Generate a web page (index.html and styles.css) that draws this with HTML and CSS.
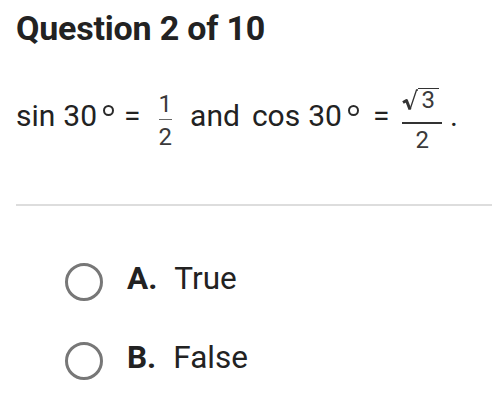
FILE: index.html
```html
<!DOCTYPE html>
<html>
<head>
<meta charset="utf-8">
<link rel="stylesheet" href="styles.css">
</head>
<body>
<div class="page">
  <h1 class="title">Question 2 of 10</h1>
  <div class="stem">
    <span class="tok">sin</span>
    <span class="tok n1">30</span>
    <span class="deg"></span>
    <span class="tok eq1">=</span>
    <span class="frac half">
      <span class="num">1</span>
      <span class="den">2</span>
    </span>
    <span class="tok w-and">and</span>
    <span class="tok w-cos">cos</span>
    <span class="tok n2">30</span>
    <span class="deg"></span>
    <span class="tok eq2">=</span>
    <span class="frac root">
      <span class="num">
        <svg class="rad" width="16" height="24" viewBox="0 0 16 24"><path d="M1 13.5 L4.5 11.5 L8 20.5" fill="none" stroke="#333" stroke-width="3" stroke-linejoin="round"/><path d="M8 20.5 L14.5 1 L16 1" fill="none" stroke="#333" stroke-width="1.3"/></svg>
        <span class="radicand">3</span>
      </span>
      <span class="den">2</span>
    </span>
    <span class="tok dot">.</span>
  </div>
  <hr class="divider">
  <div class="options">
    <div class="option"><span class="radio"></span><span class="letter">A.</span><span class="answer">True</span></div>
    <div class="option"><span class="radio"></span><span class="letter">B.</span><span class="answer">False</span></div>
  </div>
</div>
</body>
</html>
```
FILE: styles.css
```css
html, body {
  margin: 0;
  padding: 0;
  background: #ffffff;
}
.page {
  font-family: Roboto, "Liberation Sans", sans-serif;
  color: #222222;
  padding: 8px 0 0 16px;
}
.title {
  margin: 0;
  font-size: 34px;
  font-weight: 700;
  line-height: 40px;
  letter-spacing: -0.2px;
}
.stem {
  display: flex;
  align-items: flex-start;
  margin-top: 40px;
  height: 64px;
  font-size: 30px;
  line-height: 40px;
}
.tok {
  margin-top: 8px;
  white-space: pre;
}
.n1 { margin-left: 8px; }
.eq1 { margin-left: 10px; }
.w-and { margin-left: 18px; }
.w-cos { margin-left: 12px; }
.n2 { margin-left: 8px; }
.eq2 { margin-left: 14px; }
.dot { margin-left: 8px; }
.deg {
  width: 7px;
  height: 7px;
  border: 2px solid #2a2a2a;
  border-radius: 50%;
  margin: 17px 0 0 6px;
}
.frac {
  display: flex;
  flex-direction: column;
  align-items: center;
  font-family: Roboto, "Liberation Sans", sans-serif;
  font-size: 24px;
  line-height: 20px;
  color: #3a3a3a;
}
.half {
  margin: 6px 0 0 18px;
}
.half .num {
  padding: 0 0 5px;
  border-bottom: 1px solid #666666;
}
.half .den {
  padding-top: 7px;
}
.root {
  margin: 0 0 0 13px;
}
.root .num {
  display: flex;
  align-items: flex-start;
  padding: 0 3px 9px 0;
  border-bottom: 2px solid #333333;
}
.rad {
  display: block;
  margin-top: 1px;
}
.radicand {
  border-top: 1.5px solid #333333;
  padding: 1px 4px 0 3px;
}
.root .den {
  padding-top: 6px;
}
.divider {
  margin: 52px 0 0 0;
  border: 0;
  border-top: 2px solid #dddddd;
}
.options {
  display: flex;
  flex-direction: column;
  gap: 41px;
  padding: 57px 0 0 49px;
}
.option {
  display: flex;
  align-items: center;
  height: 38px;
  font-size: 31.5px;
  line-height: 30px;
}
.radio {
  width: 32px;
  height: 32px;
  border: 3px solid #777777;
  border-radius: 50%;
  margin-right: 24px;
}
.letter {
  font-weight: 700;
  margin-right: 17px;
  padding-bottom: 7px;
}
.answer {
  padding-bottom: 7px;
}
```
